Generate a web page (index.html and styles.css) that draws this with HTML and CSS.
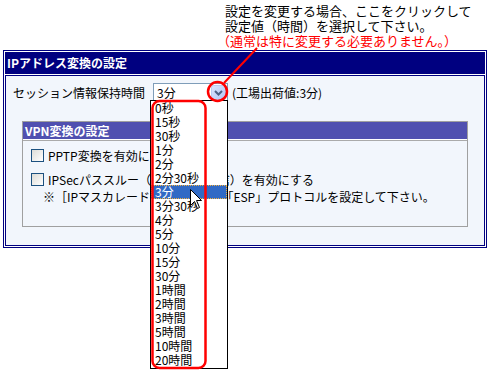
FILE: index.html
```html
<!DOCTYPE html>
<html lang="ja">
  <head>
    <meta charset="UTF-8" />
    <title>IPアドレス変換の設定</title>
    <link rel="stylesheet" href="styles.css">
  </head>
  <body>
    <div class="page">
      <div class="note">
        <p>設定を変更する場合、ここをクリックして</p>
        <p>設定値（時間）を選択して下さい。</p>
        <p class="note-red">（通常は特に変更する必要ありません。）</p>
      </div>

      <div class="panel">
        <div class="panel-title">IPアドレス変換の設定</div>
        <div class="panel-body">
          <div class="field-row">
            <span class="label">セッション情報保持時間</span>
            <div class="select">
              <span class="select-value">3分</span>
              <svg class="select-btn" width="15" height="15" viewBox="0 0 15 15">
                <defs>
                  <linearGradient id="btnFill" x1="0" y1="0" x2="1" y2="1">
                    <stop offset="0" stop-color="#dbe5fd" />
                    <stop offset="1" stop-color="#b2c6f6" />
                  </linearGradient>
                </defs>
                <rect x="0.5" y="0.5" width="14" height="14" rx="2" fill="url(#btnFill)" stroke="#b9cbf3" />
                <path d="M4 6 L7.5 9.5 L11 6" fill="none" stroke="#4d6185" stroke-width="2" />
              </svg>
            </div>
            <span class="default">(工場出荷値:3分)</span>
          </div>

          <div class="group">
            <div class="group-title">VPN変換の設定</div>
            <div class="group-body">
              <div class="check"><span class="box"></span>PPTP変換を有効にする</div>
              <div class="check check-second"><span class="box"></span>IPSecパススルー（IPSec暗号通信）を有効にする</div>
              <div class="hint">※［IPマスカレードテーブル］に「ESP」プロトコルを設定して下さい。</div>
            </div>
          </div>
        </div>
      </div>

      <ul class="dropdown">
        <li>0秒</li>
        <li>15秒</li>
        <li>30秒</li>
        <li>1分</li>
        <li>2分</li>
        <li>2分30秒</li>
        <li class="selected">3分</li>
        <li>3分30秒</li>
        <li>4分</li>
        <li>5分</li>
        <li>10分</li>
        <li>15分</li>
        <li>30分</li>
        <li>1時間</li>
        <li>2時間</li>
        <li>3時間</li>
        <li>5時間</li>
        <li>10時間</li>
        <li>20時間</li>
      </ul>

      <svg class="marks" width="488" height="374" viewBox="0 0 488 374">
        <line x1="224" y1="83" x2="257" y2="48" stroke="#f00" stroke-width="2" />
        <circle cx="217.5" cy="91.5" r="9.5" fill="none" stroke="#f00" stroke-width="2.5" />
        <rect x="152.5" y="101" width="53" height="267" rx="7" fill="none" stroke="#f00" stroke-width="2.5" />
      </svg>

      <svg class="cursor" width="13" height="21" viewBox="0 0 13 21">
        <path d="M0.5 0.5 V16.5 L4.5 12.5 L7.5 19.5 L9.5 18.5 L6.5 11.5 H11.5 Z" fill="#fff" stroke="#000" />
      </svg>
    </div>
  </body>
</html>
```

FILE: styles.css
```css
body {
  margin: 0;
  background: #fff;
  font-family: "Noto Sans CJK JP", sans-serif;
  font-size: 12px;
  color: #000;
}

.page {
  position: relative;
  width: 488px;
  height: 374px;
  overflow: hidden;
}

/* annotation above the panel */
.note {
  padding: 3px 0 0 225px;
  font-size: 13px;
  line-height: 15px;
}

.note p {
  margin: 0;
  white-space: nowrap;
}

.note-red {
  color: #f00;
  margin-left: -8px !important;
}

/* main panel */
.panel {
  box-sizing: border-box;
  width: 484px;
  margin: 2px 0 0 3px;
  border: 1px solid #000080;
  padding: 1px;
}

.panel-title {
  height: 22px;
  line-height: 22px;
  padding-left: 2px;
  background: #000080;
  color: #fff;
  font-weight: bold;
}

.panel-body {
  box-sizing: border-box;
  height: 171px;
  margin-top: 1px;
  border: 1px solid #000080;
  background: #f2f6fc;
}

.field-row {
  display: flex;
  align-items: center;
  height: 18px;
  margin: 7px 0 0 7px;
  white-space: nowrap;
}

.label {
  margin-right: 8px;
}

.select {
  box-sizing: border-box;
  display: flex;
  align-items: center;
  justify-content: space-between;
  width: 75px;
  height: 18px;
  padding: 0 1px 0 3px;
  border: 1px solid #7f9db9;
  background: #fff;
}

.select-btn {
  display: block;
}

.default {
  margin-left: 4px;
}

/* VPN group */
.group {
  box-sizing: border-box;
  width: 446px;
  margin: 20px 0 0 16px;
  border: 1px solid #a0a0a0;
}

.group-title {
  height: 17px;
  line-height: 17px;
  padding-left: 2px;
  background: #5050b0;
  color: #fff;
  font-weight: bold;
  border-bottom: 1px solid #fff;
}

.group-body {
  box-sizing: border-box;
  height: 86px;
  padding: 7px 8px 0;
  border-top: 1px solid #aaa;
}

.check,
.hint {
  display: flex;
  align-items: center;
  gap: 4px;
  height: 15px;
  white-space: nowrap;
}

.check-second {
  margin-top: 9px;
}

.hint {
  margin-top: 2px;
  padding-left: 12px;
}

.box {
  box-sizing: border-box;
  width: 13px;
  height: 13px;
  border: 1px solid #1c5180;
  background: linear-gradient(135deg, #dcdcd7, #fff);
}

/* opened select list */
.dropdown {
  position: absolute;
  left: 150px;
  top: 100px;
  box-sizing: border-box;
  width: 78px;
  height: 269px;
  margin: 0;
  padding: 0;
  list-style: none;
  border: 1px solid #000;
  background: #fff;
}

.dropdown li {
  height: 14px;
  line-height: 14px;
  padding-left: 4px;
  white-space: nowrap;
}

.dropdown .selected {
  background: #316ac5;
  color: #fff;
  outline: 1px dotted #f0b040;
  outline-offset: -1px;
}

.marks {
  position: absolute;
  left: 0;
  top: 0;
  pointer-events: none;
}

.cursor {
  position: absolute;
  left: 190px;
  top: 189px;
}
```
